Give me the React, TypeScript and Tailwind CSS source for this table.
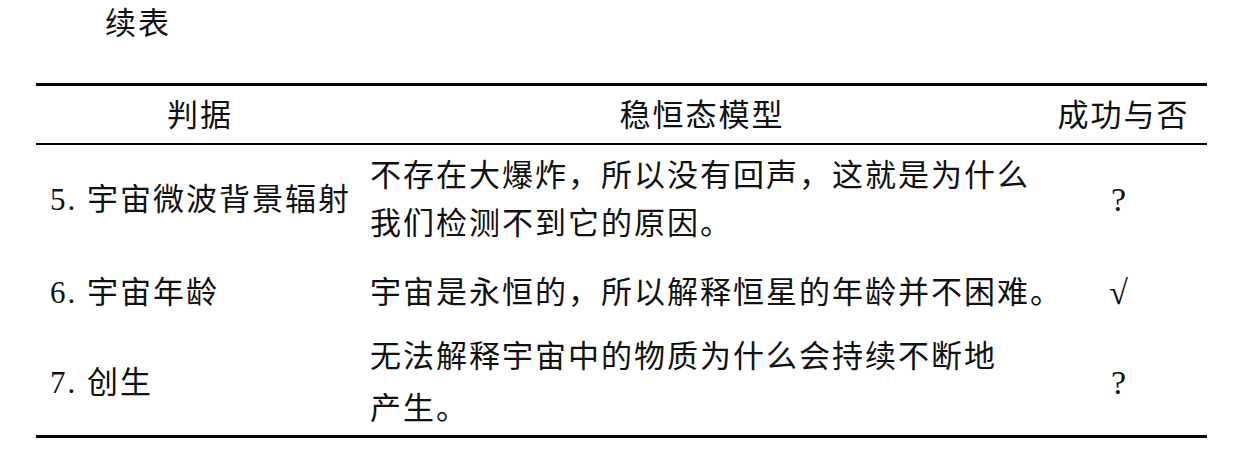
const font = "font-['Liberation_Serif','Noto_Sans_CJK_SC',serif]"

const rows = [
  {
    label: '5. 宇宙微波背景辐射',
    lines: ['不存在大爆炸，所以没有回声，这就是为什么', '我们检测不到它的原因。'],
    result: '?',
    height: 'h-[112px] leading-[48px] pt-[8px]',
  },
  {
    label: '6. 宇宙年龄',
    lines: ['宇宙是永恒的，所以解释恒星的年龄并不困难。'],
    result: '√',
    height: 'h-[75px] leading-[48px]',
  },
  {
    label: '7. 创生',
    lines: ['无法解释宇宙中的物质为什么会持续不断地', '产生。'],
    result: '?',
    height: 'h-[105px] leading-[52px]',
  },
]

export default function App() {
  return (
    <div className={`w-[1238px] h-[451px] bg-white text-[#111] ${font} text-[31px] tracking-[2px] overflow-hidden`}>
      {/* Caption */}
      <div className="pl-[105px] pt-[4px] h-[83px] leading-[40px]">续表</div>

      {/* Table */}
      <table className="ml-[36px] w-[1171px] table-fixed border-collapse border-t-[3px] border-b-[3px] border-black">
        <colgroup>
          <col className="w-[328px]" />
          <col className="w-[676px]" />
          <col className="w-[167px]" />
        </colgroup>
        <thead>
          <tr className="h-[59px] border-b-2 border-black leading-[40px]">
            <th className="font-normal text-center align-middle pt-[4px]">判据</th>
            <th className="font-normal text-center align-middle pt-[4px]">稳恒态模型</th>
            <th className="font-normal text-center align-middle pt-[4px]">成功与否</th>
          </tr>
        </thead>
        <tbody>
          {rows.map((row) => (
            <tr key={row.label} className={row.height}>
              <td className="pl-[14px] align-middle whitespace-nowrap">{row.label}</td>
              <td className="pl-[6px] align-middle whitespace-nowrap">
                {row.lines.map((line) => (
                  <div key={line}>{line}</div>
                ))}
              </td>
              <td className="text-center align-middle pr-[8px] text-[34px]">{row.result}</td>
            </tr>
          ))}
        </tbody>
      </table>
    </div>
  )
}
